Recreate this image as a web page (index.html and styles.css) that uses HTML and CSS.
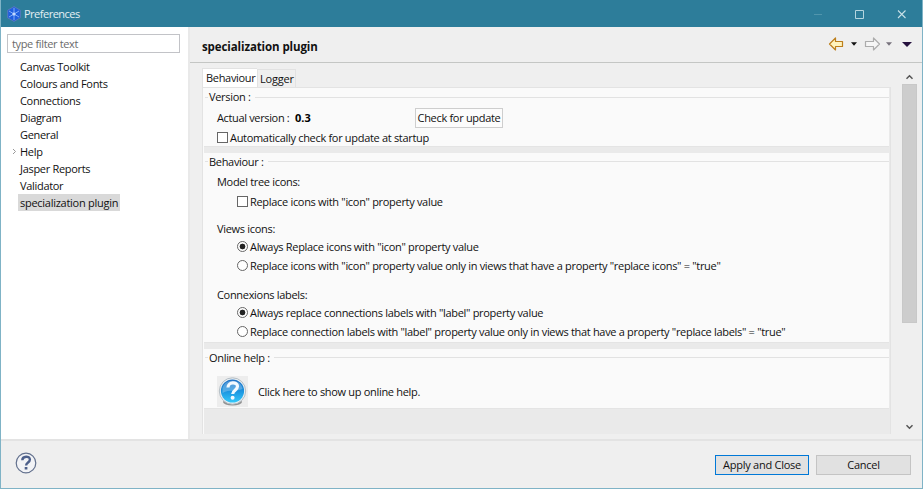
FILE: index.html
```html
<!DOCTYPE html>
<html lang="en">
<head>
<meta charset="utf-8">
<title>Preferences</title>
<link rel="stylesheet" href="styles.css">
</head>
<body>
<div class="window">
  <header class="titlebar">
    <svg class="app-icon" width="14" height="16" viewBox="0 0 14 16"><path d="M7 .6 13.3 4.2v7.6L7 15.4.7 11.8V4.2z" fill="#1f5fe0" stroke="#5778bd"/><path d="M7 2v12M2 5l10 6M12 5 2 11" stroke="#8fb5fa" stroke-width=".9"/><circle cx="7" cy="8" r="1.6" fill="#c3d9ff"/></svg>
    <span class="title">Preferences</span>
    <svg class="controls" width="96" height="14" viewBox="0 0 96 14" fill="none"><path d="M2 7.5h8" stroke="#5195ac"/><path d="M43.5 3.5h8v8h-8z" stroke="#b4d5df"/><path d="m86 3.5 7.5 7.5m0-7.5L86 11" stroke="#c8e0e7" stroke-width="1.1"/></svg>
  </header>
  <div class="main">
    <nav class="sidebar">
      <div class="filter">type filter text</div>
      <ul class="tree">
        <li><span>Canvas Toolkit</span></li>
        <li><span>Colours and Fonts</span></li>
        <li><span>Connections</span></li>
        <li><span>Diagram</span></li>
        <li><span>General</span></li>
        <li class="parent"><svg width="5" height="7" viewBox="0 0 5 7"><path d="m1 1 2.5 2.5L1 6" fill="none" stroke="#999"/></svg><span>Help</span></li>
        <li><span>Jasper Reports</span></li>
        <li><span>Validator</span></li>
        <li><span class="selected">specialization plugin</span></li>
      </ul>
    </nav>
    <main class="page">
      <div class="page-head">
        <h1>specialization plugin</h1>
        <svg width="86" height="16" viewBox="0 0 86 16"><path d="M1.5 8 7.5 2v3.500h7v5h-7V14z" fill="#fff3bd" stroke="#bd7f1c" stroke-width="1.2" stroke-linejoin="round"/><path d="M23 6.300h6L26 9.800z" fill="#111"/><path d="M51.500 8l-6-6v3.500h-8v5h8V14z" fill="#f6f6f6" stroke="#acacac" stroke-width="1.2" stroke-linejoin="round"/><path d="M58 6.300h6L61 9.800z" fill="#77727c"/><path d="M74 6h10l-5 5z" fill="#25103d"/></svg>
      </div>
      <div class="scroll">
        <div class="tabbed">
          <div class="tabs"><span class="tab active">Behaviour</span><span class="tab logger">Logger</span></div>
          <div class="pane">
            <section class="group version">
              <div class="legend"><span>Version :</span></div>
              <div class="version-row"><span class="label">Actual version :</span><b>0.3</b><span class="update">Check for update</span></div>
              <div class="row auto"><i class="check"></i><span>Automatically check for update at startup</span></div>
            </section>
            <section class="group behaviour">
              <div class="legend"><span>Behaviour :</span></div>
              <div class="row model"><span>Model tree icons:</span></div>
              <div class="row option box"><i class="check"></i><span>Replace icons with "icon" property value</span></div>
              <div class="row views"><span>Views icons:</span></div>
              <div class="row option"><i class="radio on"></i><span>Always Replace icons with "icon" property value</span></div>
              <div class="row option second"><i class="radio"></i><span>Replace icons with "icon" property value only in views that have a property "replace icons" = "true"</span></div>
              <div class="row connexions"><span>Connexions labels:</span></div>
              <div class="row option"><i class="radio on"></i><span>Always replace connections labels with "label" property value</span></div>
              <div class="row option second"><i class="radio"></i><span>Replace connection labels with "label" property value only in views that have a property "replace labels" = "true"</span></div>
            </section>
            <section class="group online">
              <div class="legend"><span>Online help :</span></div>
              <div class="help-row">
                <svg width="31" height="31" viewBox="0 0 31 31"><defs><linearGradient id="blue" x2="0" y2="1"><stop stop-color="#1c6fc4"/><stop offset=".5" stop-color="#1b93df"/><stop offset="1" stop-color="#35c9fa"/></linearGradient></defs><path d="M0 0h31v31H0z" fill="#ededed"/><ellipse cx="15.500" cy="26" rx="9.500" ry="3.500" fill="#929292"/><circle cx="15.500" cy="15" r="13.200" fill="#e9eff3" stroke="#b4bec5"/><circle cx="15.500" cy="15" r="11.600" fill="url(#blue)"/><path d="M5.500 13c1-11 19-11 20 0-6 3-13 0-20 4z" fill="#fff" opacity=".25"/><path d="M11 11.500c0-6 9.500-6 9.500-1.200 0 4-4.800 3.700-4.800 7.700" fill="none" stroke="#f3faff" stroke-width="3.200"/><circle cx="15.600" cy="21.800" r="2" fill="#f3faff"/></svg>
                <span>Click here to show up online help.</span>
              </div>
            </section>
          </div>
        </div>
        <div class="scrollbar">
          <svg width="9" height="6" viewBox="0 0 9 6"><path d="m1.500 4.700 3-3 3 3" fill="none" stroke="#555" stroke-width="1.5"/></svg>
          <div class="thumb"></div>
          <svg class="down" width="9" height="6" viewBox="0 0 9 6"><path d="m1.500 1.300 3 3 3-3" fill="none" stroke="#555" stroke-width="1.5"/></svg>
        </div>
      </div>
    </main>
  </div>
  <footer class="footer">
    <svg width="22" height="22" viewBox="0 0 22 22"><circle cx="11" cy="11" r="9.800" fill="#f2f3f6" stroke="#62708d" stroke-width="1.2"/><path d="M7.300 8.300c0-4.700 7.600-4.700 7.600-.7 0 3-3.800 2.800-3.800 5.900" fill="none" stroke="#4d608b" stroke-width="2.400"/><path d="M9.700 15h2.700v2.500H9.700z" fill="#4d608b"/></svg>
    <span class="button primary">Apply and Close</span>
    <span class="button">Cancel</span>
  </footer>
</div>
</body>
</html>
```
FILE: styles.css
```css
* { box-sizing: border-box; }
body { margin: 0; font: 11px/18px "Open Sans", "Noto Sans", sans-serif; letter-spacing: -.31px; color: #111; }
.window { display: flex; flex-direction: column; width: 923px; height: 489px; border: solid #7fb3c6; border-width: 0 1px 1px; background: #efefef; white-space: nowrap; overflow: hidden; }
.titlebar { flex: none; display: flex; align-items: center; height: 27px; margin: 0 -1px; padding: 1px 15px 0 7px; background: #2d7d9a; color: #e4f0f4; }
.title { letter-spacing: -.5px; }
.app-icon { margin-right: 3px; }
.controls { margin-left: auto; }
.main { display: flex; height: 412px; }
.sidebar { width: 189px; border-right: 2px solid #e9e9e9; background: #fff; padding: 7px 8px 0 6px; }
.filter { height: 19px; border: 1px solid #c2c3c7; padding-left: 4px; color: #6b6b6b; line-height: 17px; letter-spacing: -.35px; }
.tree { list-style: none; margin: 5px 0 0; padding: 0; }
.tree li { display: flex; align-items: center; height: 17px; line-height: 17px; padding-left: 11px; }
.tree li span { padding: 0 2px; }
.tree .parent { padding-left: 5px; }
.parent svg { margin-right: 1px; }
.tree .selected { background: #d9d9d9; letter-spacing: -.27px; }
.page { flex: 1; display: flex; flex-direction: column; }
.page-head { flex: none; height: 36px; border-bottom: 1px solid #c4c6c4; display: flex; align-items: center; justify-content: space-between; padding: 4px 8px 0 12px; }
.page-head svg { margin-top: -6px; }
h1 { margin: 0; font-size: 11.500px; letter-spacing: -.1px; }
.scroll { display: flex; justify-content: space-between; height: 371px; padding: 5px 5px 0 12px; }
.tabbed { width: 689px; }
.tabs { display: flex; align-items: flex-end; height: 19px; }
.tab { height: 18px; border: solid #e2e2e2; border-width: 1px 1px 0; }
.tab.active { width: 55px; height: 19px; padding-left: 3px; background: #fff; line-height: 18px; border-right: 0; }
.tab.logger { width: 39px; padding-left: 2px; line-height: 18px; letter-spacing: -.2px; }
.pane { height: 347px; border: solid #e3e3e3; border-width: 1px 1px 0; background: #eaeaea; box-shadow: inset 1px 0 #fafafa; padding: 0 1px; }
.group { background: #fafafa; overflow: hidden; border-bottom: 1px solid #e4e4e4; padding-left: 1px; }
.version { height: 59px; }
.behaviour { height: 190px; margin-top: 6px; }
.online { height: 60px; margin-top: 6px; }
.legend { display: flex; align-items: center; height: 18px; }
.behaviour .legend, .online .legend { height: 17px; }
.legend::before { content: ""; width: 3px; height: 1px; background: #e2e2e2; }
.legend::after { content: ""; flex: 1; height: 1px; margin-left: 4px; background: #e2e2e2; }
.legend span { padding-left: 1px; }
.version-row { display: flex; align-items: center; height: 21px; padding-left: 12px; margin-top: 1px; }
.version-row .label { width: 78px; letter-spacing: -.35px; }
.version-row b { width: 120px; color: #000; letter-spacing: 0; }
.update { width: 88px; height: 20px; border: 1px solid #cecece; text-align: center; background: #fcfcfc; line-height: 18px; }
.row { display: flex; align-items: center; height: 18px; padding-left: 12px; }
.auto { margin-top: 1px; }
.option { padding-left: 32px; }
.check, .radio { flex: none; width: 11px; height: 11px; border: 1px solid #666; background: #fff; margin: 0 2px 1px 0; }
.radio { border-radius: 50%; }
.radio.on { background: radial-gradient(circle, #222 2.600px, #fff 3.200px); }
.model { margin-top: 3px; }
.box { margin-top: 2px; }
.views { margin-top: 9px; }
.second { margin-top: 1px; }
.connexions { margin-top: 11px; }
.help-row { display: flex; align-items: center; padding-left: 12px; margin-top: 10px; }
.help-row span { margin-left: 10px; }
.scrollbar { width: 15px; padding-top: 6px; display: flex; flex-direction: column; align-items: center; }
.scrollbar svg { flex: none; }
.thumb { flex: none; width: 15px; height: 239px; margin-top: 4px; background: #cdcdcd; border: 1px solid #c8c8c8; }
.scrollbar .down { margin-top: 101px; }
.footer { flex: 1; border-top: 2px solid #e3e3e3; display: flex; align-items: center; padding: 0 11px 3px 14px; }
.footer svg { margin-right: auto; }
.button { width: 95px; height: 20px; border: 1px solid #c4c4c4; background: #e1e1e1; text-align: center; margin: 3px 0 0 7px; line-height: 18px; letter-spacing: -.25px; }
.button.primary { border: 1px solid #0078d7; width: 94px; }
```
